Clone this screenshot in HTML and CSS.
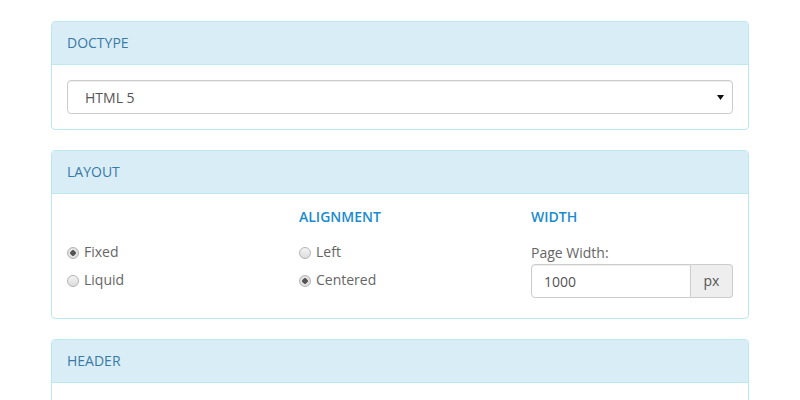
FILE: index.html
```html
<!DOCTYPE html>
<html lang="en">
<head>
  <meta charset="UTF-8">
  <title>Layout Generator</title>
  <link rel="stylesheet" href="styles.css">
</head>
<body>
  <div class="container">
    <div class="panel">
      <div class="panel-heading">Doctype</div>
      <div class="panel-body">
        <div class="select-wrap">
          <select class="form-control">
            <option>HTML 5</option>
            <option>XHTML 1.0 Strict</option>
            <option>XHTML 1.0 Transitional</option>
          </select>
          <svg class="select-arrow" width="7" height="5" viewBox="0 0 7 5"><path d="M0 0h7L3.5 5z" fill="#111"/></svg>
        </div>
      </div>
    </div>

    <div class="panel">
      <div class="panel-heading">Layout</div>
      <div class="panel-body">
        <div class="row">
          <div class="col">
            <h5 class="col-title">&nbsp;</h5>
            <label class="radio"><input type="radio" name="layout" checked> Fixed</label>
            <label class="radio"><input type="radio" name="layout"> Liquid</label>
          </div>
          <div class="col">
            <h5 class="col-title">Alignment</h5>
            <label class="radio"><input type="radio" name="align"> Left</label>
            <label class="radio"><input type="radio" name="align" checked> Centered</label>
          </div>
          <div class="col">
            <h5 class="col-title">Width</h5>
            <label class="field-label">Page Width:</label>
            <div class="input-group">
              <input type="text" class="form-control" value="1000">
              <span class="addon">px</span>
            </div>
          </div>
        </div>
      </div>
    </div>

    <div class="panel">
      <div class="panel-heading">Header</div>
      <div class="panel-body">
        <div class="row">
          <div class="col">
            <h5 class="col-title">&nbsp;</h5>
          </div>
        </div>
      </div>
    </div>
  </div>
</body>
</html>
```

FILE: styles.css
```css
body {
  font-family: "Open Sans", "Liberation Sans", sans-serif;
  font-size: 14px;
  line-height: 20px;
  color: #666;
  margin: 0;
  background-color: #fff;
}

.container {
  width: 698px;
  margin: 21px auto 0;
}

.panel {
  border: 1px solid #bce8f1;
  border-radius: 4px;
  margin-bottom: 20px;
  background-color: #fff;
  overflow: hidden;
}

.panel-heading {
  background-color: #d9edf7;
  border-bottom: 1px solid #bce8f1;
  color: #3a7aa6;
  padding: 11px 15px;
  text-transform: uppercase;
}

.panel-body {
  padding: 15px;
}

.form-control {
  display: block;
  width: 100%;
  box-sizing: border-box;
  height: 34px;
  padding: 6px 12px;
  font-family: inherit;
  font-size: 14px;
  color: #555;
  background-color: #fff;
  border: 1px solid #ccc;
  border-radius: 4px;
  box-shadow: inset 0 1px 1px rgba(0, 0, 0, 0.075);
  outline: none;
}

.select-wrap {
  position: relative;
}

.select-wrap select {
  appearance: none;
  -webkit-appearance: none;
  padding-left: 17px;
}

.select-arrow {
  position: absolute;
  right: 9px;
  top: 15px;
  pointer-events: none;
}

.row {
  display: grid;
  grid-template-columns: repeat(3, minmax(0, 1fr));
  column-gap: 30px;
}

.col {
  display: flex;
  flex-direction: column;
  min-width: 0;
}

.col-title {
  margin: 0 0 18px;
  font-size: 14px;
  line-height: 15px;
  font-weight: 600;
  color: #1a8bd0;
  text-transform: uppercase;
}

.radio {
  display: flex;
  align-items: center;
  height: 20px;
  margin-bottom: 8px;
}

.radio input {
  appearance: none;
  -webkit-appearance: none;
  width: 12px;
  height: 12px;
  margin: 2px 5px 0 0;
  border-radius: 50%;
  border: 1px solid #b4b4b4;
  background: linear-gradient(#f4f4f4, #dcdcdc);
  box-sizing: border-box;
}

.radio input:checked {
  background: radial-gradient(circle, #555 0, #555 2.5px, #e6e6e6 3px, #d6d6d6 100%);
}

.field-label {
  margin-top: 1px;
  margin-bottom: 1px;
}

.input-group {
  display: flex;
  margin-bottom: 5px;
}

.input-group .form-control {
  flex: 1;
  width: auto;
  min-width: 0;
  border-radius: 4px 0 0 4px;
}

.addon {
  width: 42px;
  box-sizing: border-box;
  height: 34px;
  line-height: 32px;
  text-align: center;
  color: #555;
  background-color: #eee;
  border: 1px solid #ccc;
  border-left: 0;
  border-radius: 0 4px 4px 0;
}
```
